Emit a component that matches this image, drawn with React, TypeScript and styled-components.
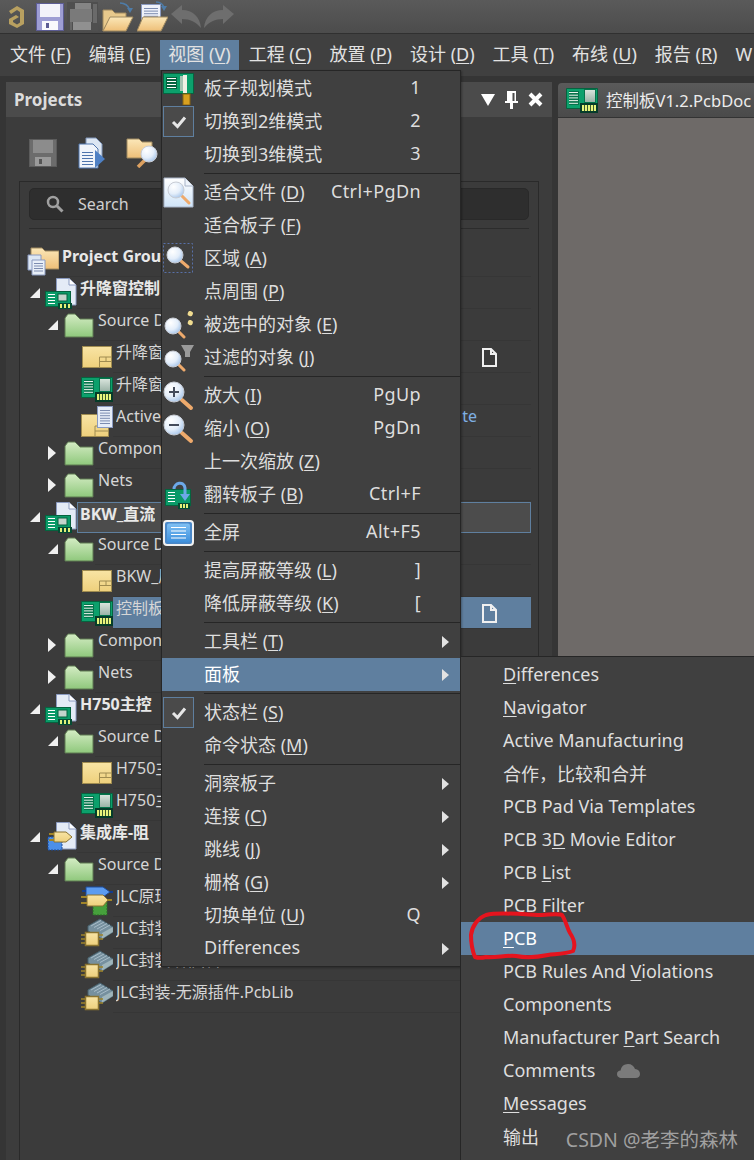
import React from "react";
import styled, { createGlobalStyle } from "styled-components";

const GlobalStyle = createGlobalStyle`
  html, body {
    margin: 0;
    padding: 0;
    background: #353535;
  }
  * {
    box-sizing: border-box;
  }
`;

const FONT = `"Noto Sans", "Noto Sans CJK SC", sans-serif`;
const SELECT = "#5f7f9f";
const MENU_LEFT = 161;

/* ---------- drawings ---------- */

const Defs = () => (
  <defs>
    <linearGradient id="folderGreen" x1="0" y1="0" x2="0" y2="1">
      <stop offset="0" stopColor="#d4ecc4" />
      <stop offset="1" stopColor="#8fc87c" />
    </linearGradient>
    <linearGradient id="sheetYellow" x1="0" y1="0" x2="0" y2="1">
      <stop offset="0" stopColor="#f8e4a4" />
      <stop offset="1" stopColor="#eed07c" />
    </linearGradient>
    <linearGradient id="folderTan" x1="0" y1="0" x2="0" y2="1">
      <stop offset="0" stopColor="#fbe7b8" />
      <stop offset="1" stopColor="#eebf78" />
    </linearGradient>
    <radialGradient id="lens" cx="0.35" cy="0.3" r="0.8">
      <stop offset="0" stopColor="#ffffff" />
      <stop offset="0.55" stopColor="#e4eefa" />
      <stop offset="1" stopColor="#9dbfe8" />
    </radialGradient>
    <linearGradient id="docBlue" x1="0" y1="0" x2="0" y2="1">
      <stop offset="0" stopColor="#ffffff" />
      <stop offset="1" stopColor="#cfe4f8" />
    </linearGradient>
    <linearGradient id="screenBlue" x1="0" y1="0" x2="0" y2="1">
      <stop offset="0" stopColor="#7fc0f4" />
      <stop offset="1" stopColor="#3d8fdc" />
    </linearGradient>
    <linearGradient id="chip" x1="0" y1="0" x2="0" y2="1">
      <stop offset="0" stopColor="#d8e4dc" />
      <stop offset="1" stopColor="#9cb4a8" />
    </linearGradient>
  </defs>
);

const Lines = ({ x, y, w, n, gap = 3, color = "#fff" }: { x: number; y: number; w: number; n: number; gap?: number; color?: string }) => (
  <>
    {Array.from({ length: n }, (_, i) => (
      <rect key={i} x={x} y={y + i * gap} width={w} height={1} fill={color} />
    ))}
  </>
);

const PcbIcon = () => (
  <svg width="32" height="25" viewBox="0 0 32 25">
    <Defs />
    <path d="M.5 .5 H31.5 V17 H28 V20.5 H.5 Z" fill="#0ca06c" stroke="#06633f" />
    <rect x="3" y="3" width="10" height="14" fill="#06744c" />
    <Lines x={3} y={4} w={9} n={5} gap={2.7} color="#e8f4ec" />
    <rect x="18" y="1" width="12" height="14" fill="#06744c" />
    <rect x="19" y="2" width="10" height="12" fill="url(#chip)" />
    <rect x="14" y="15" width="18" height="10" fill="#053c2a" />
    <rect x="16" y="17" width="14" height="6" fill="#e8f47c" />
    {[18, 21, 24, 27].map((x) => (
      <rect key={x} x={x} y={17} width={1} height={6} fill="#3c5c30" />
    ))}
  </svg>
);

const SmallBoard = () => (
  <g>
    <rect x="0.5" y="13.5" width="25" height="15" fill="#0a9a68" stroke="#06633f" />
    <Lines x={3} y={16} w={7} n={4} />
    <rect x="13" y="16" width="9" height="7" fill="#c4d4cc" stroke="#06633f" />
    <rect x="13" y="25" width="14" height="6" fill="#064c34" />
    {[15, 19, 23].map((x) => (
      <rect key={x} x={x} y={26} width={2} height={4} fill="#e4f078" />
    ))}
  </g>
);

const PageGlyph = () => (
  <path d="M11.5 .5 H24 L31 7 V27 H11.5 Z" fill="#e4ebf6" stroke="#8a9ac0" />
);

const ProjectIcon = () => (
  <svg width="32" height="31" viewBox="0 0 32 31">
    <PageGlyph />
    <path d="M24 .5 V7 H31" fill="#fff" stroke="#8a9ac0" />
    <SmallBoard />
  </svg>
);

const LibPackageIcon = () => (
  <svg width="32" height="31" viewBox="0 0 32 31">
    <Defs />
    <PageGlyph />
    <path d="M24 .5 V7 H31" fill="#fff" stroke="#8a9ac0" />
    <rect x="3" y="15" width="14" height="13" fill="#4c8fe8" stroke="#1c4c9c" strokeDasharray="2 1" />
    <path d="M9 10 H21 L27 15 L21 20 H9 Z" fill="url(#sheetYellow)" stroke="#8a7330" />
    <path d="M4 12 H9 M4 18 H9" stroke="#a08428" strokeWidth="2" />
  </svg>
);

const GroupIcon = () => (
  <svg width="32" height="30" viewBox="0 0 32 30">
    <Defs />
    <path d="M4 2 H15 L18 5 H32 V23 H4 Z" fill="url(#folderTan)" stroke="#a08a60" />
    <path d="M1 9 H14 V24 H1 Z" fill="#dde7f4" stroke="#8a9ac0" />
    <path d="M5 14 H18 V29 H5 Z" fill="#e8eff8" stroke="#8a9ac0" />
    <Lines x={7} y={17} w={9} n={4} gap={2.5} color="#7c8cb0" />
  </svg>
);

const GreenFolder = () => (
  <svg width="30" height="25" viewBox="0 0 30 25">
    <Defs />
    <path d="M1 5 L4 1 H11 L16 6 H29 V24 H1 Z" fill="url(#folderGreen)" stroke="#5e7a52" />
  </svg>
);

const SheetIcon = () => (
  <svg width="30" height="22" viewBox="0 0 30 22">
    <Defs />
    <rect x="0.5" y="0.5" width="29" height="21" fill="url(#sheetYellow)" stroke="#a08c50" />
    <path d="M17.5 21.5 V11 H29.5 M17.5 15.5 H29.5 M24 11 V15.5" fill="none" stroke="#a08c50" />
  </svg>
);

const ActiveIcon = () => (
  <svg width="32" height="31" viewBox="0 0 32 31">
    <Defs />
    <rect x="0.5" y="8.5" width="27" height="22" fill="url(#sheetYellow)" stroke="#a08c50" />
    <path d="M14 30 V20 H27 M14 25 H27" fill="none" stroke="#a08c50" />
    <rect x="16.5" y="0.5" width="15" height="21" fill="#e6edf8" stroke="#8a9ac0" />
    <Lines x={19} y={4} w={10} n={6} gap={2.6} color="#7c8cb0" />
  </svg>
);

const SchLibIcon = () => (
  <svg width="32" height="31" viewBox="0 0 32 31">
    <Defs />
    <rect x="12" y="15" width="14" height="14" fill="#46a03c" stroke="#2c6a28" strokeDasharray="2 1" />
    <path d="M5 1 H22 L29 6 L22 11 H5 Z" fill="#5c9cf0" stroke="#1c4c9c" />
    <path d="M1 5 H5 M29 6 H32" stroke="#123c8c" strokeWidth="2" />
    <path d="M6 9 H22 L27 14 L22 20 H6 Z" fill="url(#sheetYellow)" stroke="#8a7330" />
    <path d="M0 11 H6 M0 17 H6 M26 14 H31" stroke="#a08428" strokeWidth="2" />
  </svg>
);

const PcbLibIcon = () => (
  <svg width="32" height="31" viewBox="0 0 32 31">
    <Defs />
    <path d="M7 8 L19 1 L32 9 L32 14 L21 21 L7 13 Z" fill="#76909e" stroke="#46606c" />
    <path d="M10 8 L20 2.5 M13 9.5 L23 4 M16 11 L26 5.5 M19 12.5 L29 7" stroke="#a8bcc8" />
    <path d="M21 15 V21 L32 14 V9 Z" fill="#b0c4c8" opacity="0.7" />
    <rect x="4.5" y="14.5" width="13" height="13" fill="url(#sheetYellow)" stroke="#8a7330" strokeWidth="1.5" />
    <path d="M0 17 H4 M0 21 H4 M0 25 H4 M18 17 H22 M18 21 H22" stroke="#a08428" strokeWidth="1.5" />
  </svg>
);

const Lens = ({ cx, cy, r }: { cx: number; cy: number; r: number }) => (
  <circle cx={cx} cy={cy} r={r} fill="url(#lens)" stroke="#c8ccd4" strokeWidth="1" />
);

const Handle = ({ x1, y1, x2, y2, w = 3 }: { x1: number; y1: number; x2: number; y2: number; w?: number }) => (
  <line x1={x1} y1={y1} x2={x2} y2={y2} stroke="#eeaa6c" strokeWidth={w} strokeLinecap="round" />
);

const BoardPlanIcon = () => (
  <svg width="31" height="32" viewBox="0 0 31 32">
    <rect x="0.5" y="0.5" width="30" height="20" fill="#0ca06c" stroke="#06633f" />
    <rect x="3" y="4" width="11" height="12" fill="#06633f" />
    <Lines x={4} y={5} w={9} n={4} />
    <rect x="17" y="3" width="3" height="15" fill="#a8c4b4" />
    <rect x="20" y="2" width="4" height="18" fill="#f0f0e4" />
    <rect x="20" y="21" width="7" height="11" fill="#d8a020" stroke="#8a6410" />
  </svg>
);

const CheckBox = () => (
  <Check>
    <svg width="16" height="14" viewBox="0 0 16 14">
      <path d="M2 7 L6.5 11.5 L14 2.5" fill="none" stroke="#e6e6e6" strokeWidth="3" />
    </svg>
  </Check>
);

const FitDocIcon = () => (
  <svg width="31" height="31" viewBox="0 0 31 31">
    <Defs />
    <path d="M1 1 H22 L30 9 V30 H1 Z" fill="url(#docBlue)" stroke="#a8b4c8" />
    <path d="M22 1 V9 H30" fill="#eef4fb" stroke="#a8b4c8" />
    <Handle x1={19} y1={19} x2={26} y2={26} />
    <Lens cx={13} cy={13} r={8} />
  </svg>
);

const AreaIcon = () => (
  <svg width="31" height="31" viewBox="0 0 31 31">
    <Defs />
    <rect x="0.5" y="0.5" width="29" height="29" fill="none" stroke="#5870a8" strokeDasharray="2 2" />
    <Handle x1={18} y1={18} x2={25} y2={24} />
    <Lens cx={12} cy={12} r={8} />
  </svg>
);

const SelectedIcon = () => (
  <svg width="30" height="28" viewBox="0 0 30 28">
    <Defs />
    <rect x="24" y="0" width="5" height="5" rx="2" fill="#f0dc90" transform="rotate(20 26 2)" />
    <rect x="24" y="9" width="5" height="5" rx="2" fill="#f0dc90" transform="rotate(20 26 11)" />
    <Handle x1={14} y1={20} x2={20} y2={26} />
    <Lens cx={9} cy={15} r={8} />
  </svg>
);

const FilterIcon = () => (
  <svg width="30" height="28" viewBox="0 0 30 28">
    <Defs />
    <path d="M17 1 H30 L26 8 V13 H21 V8 Z" fill="#9a9a9a" />
    <Handle x1={14} y1={20} x2={20} y2={26} />
    <Lens cx={9} cy={15} r={8} />
  </svg>
);

const ZoomIcon = ({ plus }: { plus?: boolean }) => (
  <svg width="31" height="30" viewBox="0 0 31 30">
    <Defs />
    <Handle x1={19} y1={19} x2={28} y2={27} w={4} />
    <Lens cx={11} cy={11} r={10} />
    <rect x="6" y="10" width="10" height="2" fill="#444c5c" />
    {plus && <rect x="10" y="6" width="2" height="10" fill="#444c5c" />}
  </svg>
);

const FlipIcon = () => (
  <svg width="27" height="28" viewBox="0 0 27 28">
    <rect x="0.5" y="8.5" width="25" height="16" fill="#0a9a68" stroke="#06633f" />
    <Lines x={3} y={11} w={7} n={4} />
    <rect x="13" y="22" width="12" height="6" fill="#064c34" />
    {[15, 18, 21].map((x) => (
      <rect key={x} x={x} y={23} width={2} height={4} fill="#e4f078" />
    ))}
    <path d="M9 8 C9 2 19 -1 20 7 V14" fill="none" stroke="#6ca8e8" strokeWidth="3" />
    <path d="M15 13 H25 L20 20 Z" fill="#6ca8e8" />
  </svg>
);

const ScreenIcon = () => (
  <svg width="31" height="26" viewBox="0 0 31 26">
    <Defs />
    <rect x="1" y="1" width="29" height="24" rx="3" fill="#4a88c8" stroke="#f2f2f2" strokeWidth="2" />
    <rect x="4" y="3.5" width="23" height="19" rx="2" fill="url(#screenBlue)" />
    <Lines x={8} y={7} w={15} n={4} gap={3.5} />
  </svg>
);

const Logo = () => (
  <svg width="25" height="24" viewBox="0 0 25 24">
    <path d="M1 6 L9 1 L16 5 V19 L9 23 L1 19 V14 L8 10 L11 12 L5 15.5 V17 L9 19.5 L12 17.5 V7 L9 5 L3 9 Z" fill="#b8a060" />
  </svg>
);

const SaveIcon = ({ dim }: { dim?: boolean }) => (
  <svg width="28" height="28" viewBox="0 0 28 28">
    <rect x="0.5" y="0.5" width="27" height="27" fill={dim ? "#6c6c6c" : "#9e9ed4"} stroke={dim ? "#5c5c5c" : "#5c5c94"} />
    <rect x="4" y="1" width="20" height="13" fill={dim ? "#8c8c8c" : "#f2f2fa"} />
    <rect x="6" y="18" width="16" height="9" fill={dim ? "#9a9a9a" : "#f8f8fc"} />
    <rect x="10" y="20" width="3" height="5" fill={dim ? "#555" : "#5c5c94"} />
  </svg>
);

const PrintIcon = () => (
  <svg width="32" height="29" viewBox="0 0 32 29">
    <rect x="0" y="0" width="31" height="29" fill="#4f4f4f" />
    <rect x="8" y="1" width="16" height="6" fill="#858585" />
    <rect x="3" y="7" width="22" height="13" fill="#7a7a7a" />
    <rect x="26" y="2" width="4" height="19" fill="#6a6a6a" />
    <rect x="6" y="20" width="18" height="8" fill="#909090" />
    <rect x="3" y="20" width="2" height="8" fill="#666" />
  </svg>
);

const OpenFolderIcon = () => (
  <svg width="32" height="30" viewBox="0 0 32 30">
    <Defs />
    <path d="M1 8 H10 L13 11 H24 V16 H8 L1 29 Z" fill="#e8c98c" stroke="#a08a60" />
    <path d="M1 29 L8 15 H31 L24 29 Z" fill="url(#folderTan)" stroke="#a08a60" />
    <path d="M18 1 C23 1 26 3 28 8" fill="none" stroke="#4e7ca8" strokeWidth="1.5" />
    <path d="M25 6 H31 L28 11 Z" fill="#4e7ca8" />
  </svg>
);

const DocFolderIcon = () => (
  <svg width="31" height="31" viewBox="0 0 31 31">
    <Defs />
    <rect x="4.5" y="3.5" width="19" height="19" fill="#eef2fa" stroke="#8a9ac0" />
    <Lines x={7} y={7} w={14} n={5} gap={2.6} color="#7c8cb0" />
    <path d="M0 30 L6 16 H31 L24 30 Z" fill="url(#folderTan)" stroke="#a08a60" />
    <path d="M19 1 C24 1 26 3 27 7" fill="none" stroke="#4e7ca8" strokeWidth="1.5" />
    <path d="M24 5 H30 L27 10 Z" fill="#4e7ca8" />
  </svg>
);

const ArrowIcon = ({ flip }: { flip?: boolean }) => (
  <svg width="30" height="24" viewBox="0 0 30 24" style={flip ? { transform: "scaleX(-1)" } : undefined}>
    <path d="M0 9 L11 0 V5 C22 5 29 12 30 23 C25 17 19 14 11 14 V19 Z" fill="#6e6e6e" />
  </svg>
);

const PanelDocIcon = () => (
  <svg width="27" height="32" viewBox="0 0 27 32">
    <path d="M8 1 H18 L24 7 V21 H8 Z" fill="#dce6f2" stroke="#7e94b8" />
    <path d="M1 7 H15 L20 12 V31 H1 Z" fill="#f0f4fa" stroke="#4e74ac" />
    <Lines x={4} y={15} w={11} n={5} gap={3} color="#4e74ac" />
    <path d="M17 13 L27 22 L17 31 Z" fill="#4e80c4" />
  </svg>
);

const PanelFolderIcon = () => (
  <svg width="32" height="30" viewBox="0 0 32 30">
    <Defs />
    <path d="M1 1 H13 L16 4 H26 V20 H1 Z" fill="url(#folderTan)" stroke="#a08a60" />
    <line x1="20" y1="21" x2="12" y2="29" stroke="#dca060" strokeWidth="3.5" />
    <Lens cx={23} cy={16} r={8} />
  </svg>
);

const DocMark = () => (
  <svg width="15" height="19" viewBox="0 0 15 19">
    <path d="M1 1 H9 L14 6 V18 H1 Z M9 1 V6 H14" fill="none" stroke="#f0f0f0" strokeWidth="2" />
  </svg>
);

const SearchGlyph = () => (
  <svg width="18" height="18" viewBox="0 0 18 18">
    <circle cx="7" cy="7" r="5" fill="none" stroke="#a0a0a0" strokeWidth="2.5" />
    <line x1="11" y1="11" x2="16.5" y2="16.5" stroke="#a0a0a0" strokeWidth="3" />
  </svg>
);

const Cloud = () => (
  <svg width="23" height="14" viewBox="0 0 23 14">
    <path d="M5 14 C1.5 14 0 12 0 10 C0 8 1.5 6.6 3.6 6.5 C4 2.8 7 0 11 0 C14.5 0 17 2 18 5 C21 5.2 23 7.2 23 10 C23 12.4 21.3 14 18.5 14 Z" fill="#7b7b7b" />
  </svg>
);

const PinGlyph = () => (
  <svg width="13" height="18" viewBox="0 0 13 18">
    <path d="M2 0 H11 V10 H13 V12 H8 V18 H5 V12 H0 V10 H2 Z M7.5 2 V10 H9.5 V2 Z" fill="#fff" fillRule="evenodd" />
  </svg>
);

const CloseGlyph = () => (
  <svg width="15" height="15" viewBox="0 0 15 15">
    <path d="M2 2 L13 13 M13 2 L2 13" stroke="#fff" strokeWidth="4" />
  </svg>
);

const TriangleDown = () => (
  <svg width="14" height="12" viewBox="0 0 14 12">
    <path d="M0 0 H14 L7 12 Z" fill="#fff" />
  </svg>
);

const RedLoop = () => (
  <svg width="112" height="52" viewBox="468 910 112 52">
    <path
      d="M475 957 C472 950 471 942 471 935 C472 926 478 918 486 915 C498 912 520 914 537 915 C548 915 558 913 562 915 C566 921 567 928 570 933 C574 939 576 945 573 951 C566 954 556 954 548 955 C538 957 526 958 516 956 C506 955 496 958 486 957 C482 958 478 958 475 957 Z"
      fill="none"
      stroke="#e5141e"
      strokeWidth="4"
      strokeLinejoin="round"
    />
  </svg>
);

/* ---------- shell ---------- */

const Page = styled.div`
  position: relative;
  display: flex;
  flex-direction: column;
  width: 754px;
  height: 1160px;
  overflow: hidden;
  background: #353535;
  color: #e2e2e2;
  font-family: ${FONT};
`;

const ToolBar = styled.div`
  display: flex;
  align-items: center;
  gap: 3px;
  height: 34px;
  padding-left: 8px;
  background: linear-gradient(#5a5a5a, #4c4c4c);
  border-bottom: 1px solid #303030;
`;

const MenuBar = styled.div`
  display: flex;
  align-items: flex-start;
  gap: 2px;
  height: 42px;
  padding: 6px 0 0 2px;
  background: #404040;
`;

const MenuTitle = styled.div<{ $open?: boolean }>`
  height: 30px;
  padding: 0 8px;
  font-size: 18px;
  line-height: 28px;
  white-space: nowrap;
  background: ${(p) => (p.$open ? SELECT : "transparent")};
`;

const Key = styled.span`
  text-decoration: underline;
  text-underline-offset: 2px;
  text-decoration-thickness: 1px;
`;

const Workspace = styled.div`
  flex: 1;
  display: flex;
  min-height: 0;
  padding: 6px 0 0 6px;
`;

/* ---------- projects panel ---------- */

const ProjectsPanel = styled.section`
  display: flex;
  flex-direction: column;
  width: 546px;
  background: #3c3c3c;
`;

const PanelHeader = styled.header`
  display: flex;
  align-items: center;
  height: 35px;
  padding: 0 9px 0 8px;
  background: #4b4b4b;
`;

const PanelTitle = styled.h2`
  flex: 1;
  margin: 0;
  font-size: 17px;
  font-weight: 700;
  color: #dcdcdc;
`;

const PanelControls = styled.div`
  display: flex;
  align-items: center;
  gap: 10px;
`;

const PanelTools = styled.div`
  display: flex;
  align-items: center;
  gap: 21px;
  height: 30px;
  margin: 21px 0 13px;
  padding-left: 23px;
`;

const TreeBox = styled.div`
  flex: 1;
  margin: 0 13px;
  padding: 6px 7px 0 0;
  background: #3b3b3b;
  border: 1px solid #2a2a2a;
  border-bottom: 0;
`;

const SearchField = styled.div`
  display: flex;
  align-items: center;
  gap: 14px;
  height: 32px;
  margin: 0 2px 8px 9px;
  padding-left: 16px;
  font-size: 16px;
  color: #cfcfcf;
  background: #2e2e2e;
  border: 1px solid #292929;
  border-radius: 5px;
`;

const TreeRule = styled.div`
  height: 1px;
  margin: 0 2px 16px 9px;
  background: #2c2c2c;
`;

const Row = styled.div<{ $indent: number }>`
  display: flex;
  align-items: center;
  height: 32px;
  padding-left: ${(p) => p.$indent}px;
`;

const Twist = styled.span`
  display: flex;
  flex: none;
  align-items: center;
  width: 16px;
`;

const RowIcon = styled.span`
  display: flex;
  flex: none;
  align-items: center;
  justify-content: center;
  width: 32px;
  height: 32px;
  margin-left: -1px;
`;

const RowBody = styled.div<{ $selected?: boolean; $editing?: boolean; $strong?: boolean }>`
  flex: 1;
  display: flex;
  align-items: flex-start;
  height: 32px;
  min-width: 0;
  padding-left: 3px;
  font-size: 16px;
  line-height: 23px;
  white-space: nowrap;
  font-weight: ${(p) => (p.$strong ? 700 : 400)};
  color: ${(p) => (p.$strong ? "#e8e8e8" : "#d6d6d6")};
  background: ${(p) => (p.$selected ? SELECT : p.$editing ? "#4c4c4c" : "transparent")};
  border-bottom: 1px solid ${(p) => (p.$editing ? SELECT : "#363636")};
  ${(p) => p.$editing && `border: 1px solid ${SELECT}; padding-left: 2px; line-height: 22px; height: 31px;`}
`;

const RowName = styled.span`
  flex: none;
  overflow: hidden;
`;

const RowNote = styled.span`
  margin-left: auto;
  padding-right: 54px;
  color: #7fb0e4;
`;

const RowMark = styled.span`
  display: flex;
  margin: 7px 0 0 auto;
  padding-right: 34px;
`;

const DocArea = styled.section`
  flex: 1;
  display: flex;
  flex-direction: column;
  margin-left: 6px;
  padding-top: 1px;
  min-width: 0;
`;

const DocTab = styled.div`
  display: flex;
  align-items: center;
  gap: 8px;
  height: 35px;
  padding-left: 8px;
  font-size: 16.5px;
  color: #ececec;
  white-space: nowrap;
  background: linear-gradient(#5a5a5a, #4a4a4a);
  border-radius: 4px 0 0 0;
  border-bottom: 1px solid #333;
`;

const DocCanvas = styled.div`
  flex: 1;
  background: #6e6a68;
`;

/* ---------- menus ---------- */

const DropMenu = styled.div`
  position: absolute;
  left: ${MENU_LEFT}px;
  top: 70px;
  width: 300px;
  height: 897px;
  padding-top: 1px;
  background: #404040;
  border: 1px solid #262626;
  box-shadow: 1px 1px 2px rgba(0, 0, 0, 0.3);
`;

const SubMenu = styled.div`
  position: absolute;
  left: 460px;
  top: 656px;
  width: 294px;
  height: 504px;
  padding-top: 1px;
  background: #404040;
  border: 1px solid #262626;
  border-right: 0;
  border-bottom: 0;
`;

const MenuItem = styled.div<{ $active?: boolean }>`
  display: grid;
  grid-template-columns: 42px 1fr auto 39px;
  align-items: center;
  height: 33px;
  font-size: 18px;
  white-space: nowrap;
  background: ${(p) => (p.$active ? SELECT : "transparent")};
  color: ${(p) => (p.$active ? "#fff" : "#dedede")};
`;

const ItemText = styled.span`
  margin-bottom: 3px;
`;

const ItemShortcut = styled.span`
  margin-bottom: 3px;
  letter-spacing: 0.4px;
`;

const ItemIcon = styled.span`
  display: flex;
  align-items: center;
  justify-content: center;
  width: 33px;
  height: 33px;
`;

const ChevronSlot = styled.span`
  display: flex;
  padding-left: 21px;
`;

const Chevron = styled.span`
  width: 0;
  height: 0;
  border-left: 7px solid #e2e2e2;
  border-top: 6px solid transparent;
  border-bottom: 6px solid transparent;
`;

const Separator = styled.div`
  height: 1px;
  margin: 2px 0 2px 42px;
  background: #262626;
`;

const Check = styled.span`
  display: flex;
  align-items: center;
  justify-content: center;
  width: 31px;
  height: 31px;
  background: #4a4a4a;
  border: 1px solid ${SELECT};
`;

const SubItem = styled.div<{ $active?: boolean }>`
  display: flex;
  align-items: center;
  gap: 22px;
  height: 33px;
  padding-left: 42px;
  font-size: 18px;
  white-space: nowrap;
  background: ${(p) => (p.$active ? SELECT : "transparent")};
  color: ${(p) => (p.$active ? "#fff" : "#dedede")};
`;

const SubText = styled.span`
  margin-bottom: 2px;
`;

const Annotation = styled.div`
  position: absolute;
  left: 468px;
  top: 910px;
  display: flex;
`;

const Watermark = styled.div`
  position: absolute;
  right: 16px;
  top: 1126px;
  font-size: 19.5px;
  line-height: 28px;
  color: rgba(205, 205, 205, 0.7);
  white-space: nowrap;
`;

/* ---------- data ---------- */

const titles: [string, string][] = [
  ["文件", "F"],
  ["编辑", "E"],
  ["视图", "V"],
  ["工程", "C"],
  ["放置", "P"],
  ["设计", "D"],
  ["工具", "T"],
  ["布线", "U"],
  ["报告", "R"],
];

type Entry =
  | "sep"
  | { text: string; key?: string; short?: string; icon?: React.ReactNode; sub?: boolean; active?: boolean };

const entries: Entry[] = [
  { text: "板子规划模式", short: "1", icon: <BoardPlanIcon /> },
  { text: "切换到2维模式", short: "2", icon: <CheckBox /> },
  { text: "切换到3维模式", short: "3" },
  "sep",
  { text: "适合文件", key: "D", short: "Ctrl+PgDn", icon: <FitDocIcon /> },
  { text: "适合板子", key: "F" },
  { text: "区域", key: "A", icon: <AreaIcon /> },
  { text: "点周围", key: "P" },
  { text: "被选中的对象", key: "E", icon: <SelectedIcon /> },
  { text: "过滤的对象", key: "J", icon: <FilterIcon /> },
  "sep",
  { text: "放大", key: "I", short: "PgUp", icon: <ZoomIcon plus /> },
  { text: "缩小", key: "O", short: "PgDn", icon: <ZoomIcon /> },
  { text: "上一次缩放", key: "Z" },
  { text: "翻转板子", key: "B", short: "Ctrl+F", icon: <FlipIcon /> },
  "sep",
  { text: "全屏", short: "Alt+F5", icon: <ScreenIcon /> },
  "sep",
  { text: "提高屏蔽等级", key: "L", short: "]" },
  { text: "降低屏蔽等级", key: "K", short: "[" },
  "sep",
  { text: "工具栏", key: "T", sub: true },
  { text: "面板", sub: true, active: true },
  "sep",
  { text: "状态栏", key: "S", icon: <CheckBox /> },
  { text: "命令状态", key: "M" },
  "sep",
  { text: "洞察板子", sub: true },
  { text: "连接", key: "C", sub: true },
  { text: "跳线", key: "J", sub: true },
  { text: "栅格", key: "G", sub: true },
  { text: "切换单位", key: "U", short: "Q" },
  { text: "Differences", sub: true },
];

// before / underlined letter / after
const panels: { parts: [string, string, string]; active?: boolean; cloud?: boolean }[] = [
  { parts: ["", "D", "ifferences"] },
  { parts: ["", "N", "avigator"] },
  { parts: ["Active Manufacturing", "", ""] },
  { parts: ["合作，比较和合并", "", ""] },
  { parts: ["PCB Pad Via Templates", "", ""] },
  { parts: ["PCB 3", "D", " Movie Editor"] },
  { parts: ["PCB ", "L", "ist"] },
  { parts: ["PCB Filter", "", ""] },
  { parts: ["", "P", "CB"], active: true },
  { parts: ["PCB Rules And ", "V", "iolations"] },
  { parts: ["Components", "", ""] },
  { parts: ["Manufacturer ", "P", "art Search"] },
  { parts: ["Comments", "", ""], cloud: true },
  { parts: ["", "M", "essages"] },
  { parts: ["输出", "", ""] },
];

type TreeRow = {
  name: string;
  indent: number;
  twist?: "open" | "closed";
  icon: React.ReactNode;
  strong?: boolean;
  selected?: boolean;
  editing?: boolean;
  note?: string;
  mark?: boolean;
  clear?: boolean; // name is not covered by the open menu
};

const folder = (name: string, closed?: boolean): TreeRow => ({
  name,
  indent: 28,
  twist: closed ? "closed" : "open",
  icon: <GreenFolder />,
});

const project = (name: string, icon: React.ReactNode, editing?: boolean): TreeRow => ({
  name,
  indent: 10,
  twist: "open",
  icon,
  strong: true,
  editing,
});

const file = (name: string, icon: React.ReactNode, extra?: Partial<TreeRow>): TreeRow => ({
  name,
  indent: 62,
  icon,
  ...extra,
});

const rows: TreeRow[] = [
  { name: "Project Group", indent: 8, icon: <GroupIcon />, strong: true },
  project("升降窗控制", <ProjectIcon />),
  folder("Source D"),
  file("升降窗", <SheetIcon />, { mark: true }),
  file("升降窗", <PcbIcon />),
  file("Active", <ActiveIcon />, { note: "te" }),
  folder("Components", true),
  folder("Nets", true),
  project("BKW_直流", <ProjectIcon />, true),
  folder("Source D"),
  file("BKW_原", <SheetIcon />),
  file("控制板V", <PcbIcon />, { selected: true, mark: true }),
  folder("Components", true),
  folder("Nets", true),
  project("H750主控", <ProjectIcon />),
  folder("Source D"),
  file("H750主", <SheetIcon />),
  file("H750主", <PcbIcon />),
  project("集成库-阻", <LibPackageIcon />),
  folder("Source D"),
  file("JLC原理", <SchLibIcon />),
  file("JLC封装", <PcbLibIcon />),
  file("JLC封装-贴片库.PcbLib", <PcbLibIcon />, { clear: true }),
  file("JLC封装-无源插件.PcbLib", <PcbLibIcon />, { clear: true }),
];

// room a tree row's name has before the open menu covers it
const nameRoom = (row: TreeRow) => MENU_LEFT - (20 + row.indent + (row.twist ? 16 : 0) + 31 + 3);

const TwistOpen = () => (
  <svg width="10" height="10" viewBox="0 0 10 10">
    <path d="M10 0 V10 H0 Z" fill="#f0f0f0" />
  </svg>
);

const TwistClosed = () => (
  <svg width="8" height="14" viewBox="0 0 8 14">
    <path d="M0 0 L8 7 L0 14 Z" fill="#f0f0f0" />
  </svg>
);

const App = () => {
  return (
    <Page>
      <GlobalStyle />
      <ToolBar>
        <Logo />
        <SaveIcon />
        <PrintIcon />
        <OpenFolderIcon />
        <DocFolderIcon />
        <ArrowIcon />
        <ArrowIcon flip />
      </ToolBar>
      <MenuBar>
        {titles.map(([text, key]) => (
          <MenuTitle key={key} $open={key === "V"}>
            {text} (<Key>{key}</Key>)
          </MenuTitle>
        ))}
        <MenuTitle>W</MenuTitle>
      </MenuBar>
      <Workspace>
        <ProjectsPanel>
          <PanelHeader>
            <PanelTitle>Projects</PanelTitle>
            <PanelControls>
              <TriangleDown />
              <PinGlyph />
              <CloseGlyph />
            </PanelControls>
          </PanelHeader>
          <PanelTools>
            <SaveIcon dim />
            <PanelDocIcon />
            <PanelFolderIcon />
          </PanelTools>
          <TreeBox>
            <SearchField>
              <SearchGlyph />
              Search
            </SearchField>
            <TreeRule />
            {rows.map((row, i) => (
              <Row key={i} $indent={row.indent}>
                {row.twist && <Twist>{row.twist === "open" ? <TwistOpen /> : <TwistClosed />}</Twist>}
                <RowIcon>{row.icon}</RowIcon>
                <RowBody $selected={row.selected} $editing={row.editing} $strong={row.strong}>
                  <RowName style={row.clear ? undefined : { maxWidth: nameRoom(row) }}>{row.name}</RowName>
                  {row.note && <RowNote>{row.note}</RowNote>}
                  {row.mark && (
                    <RowMark>
                      <DocMark />
                    </RowMark>
                  )}
                </RowBody>
              </Row>
            ))}
          </TreeBox>
        </ProjectsPanel>
        <DocArea>
          <DocTab>
            <PcbIcon />
            控制板V1.2.PcbDoc
          </DocTab>
          <DocCanvas />
        </DocArea>
      </Workspace>

      <DropMenu>
        {entries.map((entry, i) =>
          entry === "sep" ? (
            <Separator key={i} />
          ) : (
            <MenuItem key={i} $active={entry.active}>
              <ItemIcon>{entry.icon}</ItemIcon>
              <ItemText>
                {entry.text}
                {entry.key && (
                  <>
                    {" "}
                    (<Key>{entry.key}</Key>)
                  </>
                )}
              </ItemText>
              <ItemShortcut>{entry.short}</ItemShortcut>
              <ChevronSlot>{entry.sub && <Chevron />}</ChevronSlot>
            </MenuItem>
          ),
        )}
      </DropMenu>

      <SubMenu>
        {panels.map(({ parts, active, cloud }, i) => (
          <SubItem key={i} $active={active}>
            <SubText>
              {parts[0]}
              {parts[1] && <Key>{parts[1]}</Key>}
              {parts[2]}
            </SubText>
            {cloud && <Cloud />}
          </SubItem>
        ))}
      </SubMenu>

      <Annotation>
        <RedLoop />
      </Annotation>
      <Watermark>CSDN @老李的森林</Watermark>
    </Page>
  );
};

export default App;
